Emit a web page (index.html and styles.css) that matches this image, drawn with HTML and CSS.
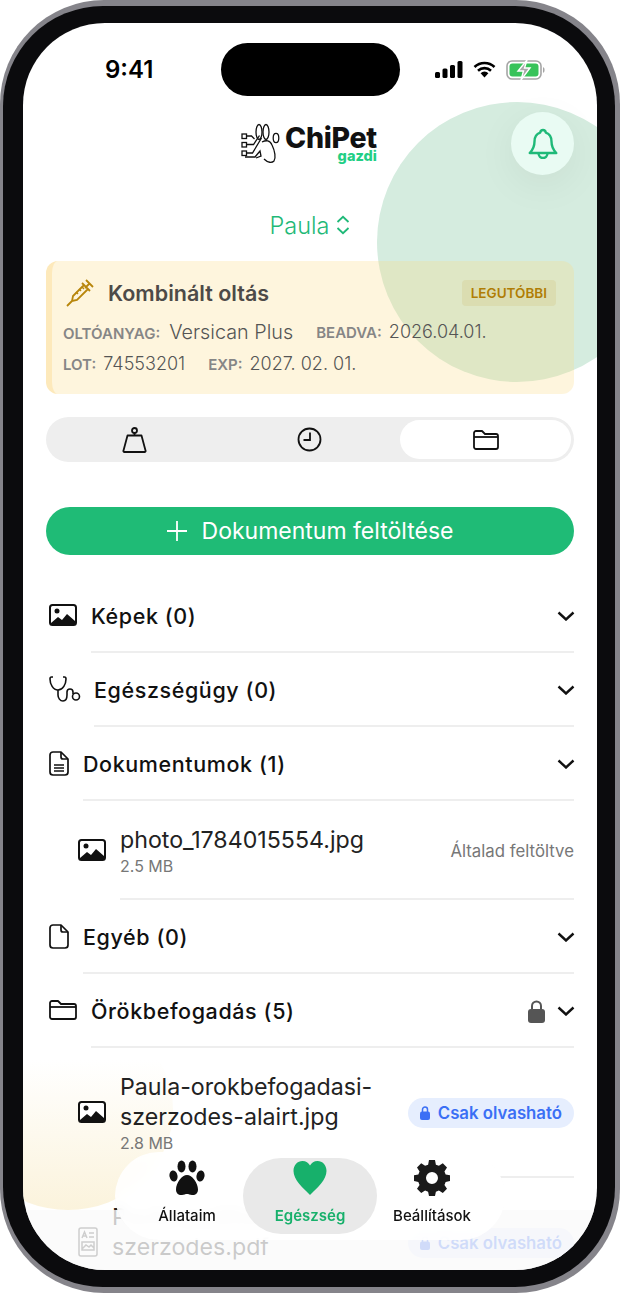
FILE: index.html
```html
<!doctype html>
<html lang="hu">
<head>
    <meta charset="utf-8">
    <meta name="viewport" content="width=device-width, initial-scale=1">
    <title>ChiPet gazdi</title>
    <link rel="stylesheet" href="styles.css">
</head>
<body>
<div class="phone">
<div class="bezel">
<div class="screen">
    <div class="blob-green"></div>
    <div class="blob-yellow"></div>

    <div class="content">
        <!-- Status bar -->
        <div class="status">
            <span class="time">9:41</span>
            <div class="island"></div>
            <div class="status-icons">
                <svg width="28" height="17" viewBox="0 0 28 17"><rect x="0" y="11" width="5" height="6" rx="1.5"/><rect x="7.5" y="7.5" width="5" height="9.5" rx="1.5"/><rect x="15" y="4" width="5" height="13" rx="1.5"/><rect x="22.5" y="0" width="5" height="17" rx="1.5"/></svg>
                <svg width="23" height="17" viewBox="0 0 23 17"><path d="M1.5 6a14.5 14.5 0 0 1 20 0M5 9.7a9.5 9.5 0 0 1 13 0" fill="none" stroke="#000" stroke-width="2.6"/><path d="M7.6 12.2a5.6 5.6 0 0 1 7.8 0L11.5 16.6z"/></svg>
                <svg width="40" height="20" viewBox="0 0 40 20"><rect x="1" y="1" width="34" height="18" rx="5" fill="#fff" stroke="#a5a5a5" stroke-width="1.6"/><rect x="3.5" y="3.5" width="29" height="13" rx="3" fill="#38c35a"/><path d="M37 7v6a3 3 0 0 0 1.6-3A3 3 0 0 0 37 7z" fill="#a5a5a5"/><path d="M21 0l-9 11h5.5L15 20l9-12h-5.5z" fill="#a9a9a9" stroke="#fff" stroke-width="1.4"/></svg>
            </div>
        </div>

        <!-- Logo and bell -->
        <div class="header">
            <div class="logo">
                <svg class="logo-mark" width="41" height="41" viewBox="0 0 41 41" fill="none" stroke="#111" stroke-width="1.3">
                    <ellipse cx="19" cy="9" rx="3" ry="7.500"/><ellipse cx="26" cy="9" rx="3" ry="7.500"/><ellipse cx="36" cy="15" rx="2.800" ry="4.600"/>
                    <rect x="2" y="11" width="4.500" height="4.500"/><rect x="2" y="19.500" width="4.500" height="4.500"/><rect x="2" y="28" width="4.500" height="4.500"/>
                    <path d="M6.500 13h5l3 3M6.500 21.500h7l6-9M6.500 30h6l9-15M5 34h10l5-6 1 5-5 2"/>
                    <path d="M22 19c4-2 8-2 10 3 3 6 4 13 2 16-2 2-6 2-10-2"/>
                </svg>
                <div class="logo-text">
                    <span class="logo-name">ChiPet</span>
                    <span class="logo-sub">gazdi</span>
                </div>
            </div>
            <div class="bell">
                <svg width="30" height="31" viewBox="0 0 30 31" fill="none" stroke="#1fb978" stroke-width="2.4" stroke-linejoin="round"><path d="M15 2c-1.600 0-2.600 1-2.800 2.600C8 6 6.500 9.500 6.500 13.500c0 4.500-1.800 8.500-4.800 11.500h26.600c-3-3-4.800-7-4.800-11.500 0-4-1.500-7.500-5.700-8.900C17.600 3 16.600 2 15 2z"/><path d="M10.500 25c0 3 2 5 4.500 5s4.500-2 4.500-5"/></svg>
            </div>
        </div>

        <div class="pet-name">
            <span>Paula</span>
            <svg width="14" height="20" viewBox="0 0 14 20" fill="none" stroke="#1fb978" stroke-width="1.800"><path d="M1.500 7L7 1.800 12.500 7M1.500 13L7 18.200 12.500 13"/></svg>
        </div>

        <!-- Last vaccination -->
        <div class="vaccine">
            <div class="vaccine-top">
                <svg width="28" height="28" viewBox="0 0 28 28" fill="none" stroke="#b8860b" stroke-width="1.800"><path d="M20 1l7 7M23.500 4.500L19 9M16 4l8 8M18 6L7 17l-1 5 5-1L22 10M6 22l-5 5"/><path d="M10 13l2 2M13 10l2 2M16 8l2 2" stroke-width="1.500"/></svg>
                <span class="vaccine-title">Kombinált oltás</span>
                <span class="vaccine-badge">LEGUTÓBBI</span>
            </div>
            <div class="vaccine-row">
                <span class="field"><b>OLTÓANYAG:</b> <span class="value-wide">Versican Plus</span></span>
                <span class="field"><b>BEADVA:</b> 2026.04.01.</span>
            </div>
            <div class="vaccine-row">
                <span class="field"><b>LOT:</b> 74553201</span>
                <span class="field"><b>EXP:</b> 2027. 02. 01.</span>
            </div>
        </div>

        <!-- Tabs -->
        <div class="tabs">
            <div class="tab tab-weight">
                <svg width="25" height="26" viewBox="0 0 25 26" fill="none" stroke="#111" stroke-width="1.800" stroke-linejoin="round"><circle cx="12.500" cy="3.500" r="2.500"/><path d="M12.500 6v2.500M5.500 8.500h14L23.500 23.500a1 1 0 0 1-1 1.500h-20a1 1 0 0 1-1-1.500z"/></svg>
            </div>
            <div class="tab tab-history">
                <svg width="25" height="25" viewBox="0 0 25 25" fill="none" stroke="#111" stroke-width="1.800"><circle cx="12.500" cy="12.500" r="11"/><path d="M13 5.500v7.500H6.500"/></svg>
            </div>
            <div class="tab tab-docs">
                <svg width="26" height="20" viewBox="0 0 26 20" fill="none" stroke="#111" stroke-width="1.800" stroke-linejoin="round"><path d="M1 3a2 2 0 0 1 2-2h6l3 3h11a2 2 0 0 1 2 2v11a2 2 0 0 1-2 2H3a2 2 0 0 1-2-2z"/><path d="M1 7h24"/></svg>
            </div>
        </div>

        <div class="upload">
            <svg width="20" height="20" viewBox="0 0 20 20" stroke="#fff" stroke-width="1.800"><path d="M10 0v20M0 10h20"/></svg>
            <span>Dokumentum feltöltése</span>
        </div>

        <!-- Document groups -->
        <div class="list">
            <div class="row">
                <svg class="icon" width="28" height="22" viewBox="0 0 28 22"><rect x="1" y="1" width="26" height="20" rx="2.500" fill="#fff" stroke="#111" stroke-width="2"/><circle cx="8" cy="7" r="2.500" fill="#111"/><path d="M2 19l7-6 4 3 5-6 8 7v3H2z" fill="#111"/></svg>
                <div class="row-body">
                    <span class="row-title">Képek (0)</span>
                    <svg class="chevron" width="18" height="10" viewBox="0 0 18 10"><path d="M1.500 1.500L9 8.500l7.500-7"/></svg>
                </div>
            </div>
            <div class="row">
                <svg class="icon icon-steth" width="32" height="28" viewBox="0 0 32 28" fill="none" stroke="#111" stroke-width="1.600"><path d="M4 2H2.500C1.500 2 1 3 1 4c0 5 3 11 8 11s8-6 8-11c0-1-.5-2-1.500-2H14"/><path d="M9 15v5c0 3 2 6 5 6s4-3 4-6v-3c0-2 1-3 3-3s3 1 3 3v2"/><circle cx="27" cy="21.500" r="3.500"/></svg>
                <div class="row-body">
                    <span class="row-title">Egészségügy (0)</span>
                    <svg class="chevron" width="18" height="10" viewBox="0 0 18 10"><path d="M1.500 1.500L9 8.500l7.500-7"/></svg>
                </div>
            </div>
            <div class="row">
                <svg class="icon" width="20" height="25" viewBox="0 0 20 25" fill="none" stroke="#111" stroke-width="1.700" stroke-linejoin="round"><path d="M12 1H4a3 3 0 0 0-3 3v17a3 3 0 0 0 3 3h12a3 3 0 0 0 3-3V8z"/><path d="M12 1v5a2 2 0 0 0 2 2h5M5 14h10M5 17h10M5 20h10"/></svg>
                <div class="row-body">
                    <span class="row-title">Dokumentumok (1)</span>
                    <svg class="chevron" width="18" height="10" viewBox="0 0 18 10"><path d="M1.500 1.500L9 8.500l7.500-7"/></svg>
                </div>
            </div>
            <div class="row row-file">
                <svg class="icon" width="28" height="22" viewBox="0 0 28 22"><rect x="1" y="1" width="26" height="20" rx="2.500" fill="#fff" stroke="#111" stroke-width="2"/><circle cx="8" cy="7" r="2.500" fill="#111"/><path d="M2 19l7-6 4 3 5-6 8 7v3H2z" fill="#111"/></svg>
                <div class="row-body file-short">
                    <div class="file-text">
                        <div class="file-name">photo_1784015554.jpg</div>
                        <div class="file-size">2.5 MB</div>
                    </div>
                    <span class="file-owner">Általad feltöltve</span>
                </div>
            </div>
            <div class="row">
                <svg class="icon" width="20" height="25" viewBox="0 0 20 25" fill="none" stroke="#111" stroke-width="1.700" stroke-linejoin="round"><path d="M12 1H4a3 3 0 0 0-3 3v17a3 3 0 0 0 3 3h12a3 3 0 0 0 3-3V8z"/><path d="M12 1v5a2 2 0 0 0 2 2h5"/></svg>
                <div class="row-body">
                    <span class="row-title">Egyéb (0)</span>
                    <svg class="chevron" width="18" height="10" viewBox="0 0 18 10"><path d="M1.500 1.500L9 8.500l7.500-7"/></svg>
                </div>
            </div>
            <div class="row">
                <svg class="icon" width="28" height="20" viewBox="0 0 28 20" fill="none" stroke="#111" stroke-width="1.800" stroke-linejoin="round"><path d="M1 3a2 2 0 0 1 2-2h6l3 3h13a2 2 0 0 1 2 2v11a2 2 0 0 1-2 2H3a2 2 0 0 1-2-2z"/><path d="M1 7h26"/></svg>
                <div class="row-body">
                    <span class="row-title">Örökbefogadás (5)</span>
                    <svg class="lock-gray" width="17" height="23" viewBox="0 0 17 23"><path d="M4 10V6a4.500 4.500 0 0 1 9 0v4" fill="none" stroke="#555" stroke-width="2"/><rect y="9" width="17" height="14" rx="3" fill="#555"/></svg>
                    <svg class="chevron chevron-near" width="18" height="10" viewBox="0 0 18 10"><path d="M1.500 1.500L9 8.500l7.500-7"/></svg>
                </div>
            </div>
            <div class="row row-file">
                <svg class="icon" width="28" height="22" viewBox="0 0 28 22"><rect x="1" y="1" width="26" height="20" rx="2.500" fill="#fff" stroke="#111" stroke-width="2"/><circle cx="8" cy="7" r="2.500" fill="#111"/><path d="M2 19l7-6 4 3 5-6 8 7v3H2z" fill="#111"/></svg>
                <div class="row-body file-tall">
                    <div class="file-text">
                        <div class="file-name">Paula-orokbefogadasi-szerzodes-alairt.jpg</div>
                        <div class="file-size">2.8 MB</div>
                    </div>
                    <span class="readonly">
                        <svg width="10" height="14" viewBox="0 0 10 14"><path d="M2.500 6V3.500a2.500 2.500 0 0 1 5 0V6" fill="none" stroke="#3b6ff5" stroke-width="1.500"/><rect y="5.500" width="10" height="8.500" rx="2" fill="#3b6ff5"/></svg>
                        Csak olvasható
                    </span>
                </div>
            </div>
            <div class="row row-file">
                <svg class="icon icon-pdf" width="20" height="30" viewBox="0 0 20 30" fill="none" stroke="#333" stroke-width="1.500"><rect x="1" y="1" width="18" height="28" rx="2"/><path d="M4 11l2.500-6L9 11M5 9h3M11 6h5M11 10h5M4 15h12v8H4zM4 22l4-4 3 2 2-2 3 3"/></svg>
                <div class="row-body file-tall">
                    <div class="file-text file-text-cut">
                        <div class="file-name">Paula-orokbefogadasi-szerzodes.pdf</div>
                    </div>
                    <span class="readonly">
                        <svg width="10" height="14" viewBox="0 0 10 14"><path d="M2.500 6V3.500a2.500 2.500 0 0 1 5 0V6" fill="none" stroke="#3b6ff5" stroke-width="1.500"/><rect y="5.500" width="10" height="8.500" rx="2" fill="#3b6ff5"/></svg>
                        Csak olvasható
                    </span>
                </div>
            </div>
        </div>
    </div>

    <div class="fade"></div>

    <!-- Bottom navigation -->
    <div class="nav">
        <div class="nav-item nav-pets">
            <svg width="36" height="36" viewBox="0 0 36 36" fill="#111"><ellipse cx="4.500" cy="16" rx="4" ry="5.500" transform="rotate(-12 4.500 16)"/><ellipse cx="12.500" cy="6.500" rx="4" ry="6"/><ellipse cx="23.500" cy="6.500" rx="4" ry="6"/><ellipse cx="31.500" cy="16" rx="4" ry="5.500" transform="rotate(12 31.500 16)"/><path d="M18 15c5 0 11 8 11 14.500 0 4-3 6-6 5.500-2-.3-3.500-1-5-1s-3 .7-5 1c-3 .5-6-1.500-6-5.500C7 23 13 15 18 15z"/></svg>
            <span>Állataim</span>
        </div>
        <div class="nav-item nav-active">
            <svg width="34" height="36" viewBox="0 0 34 36" fill="#17b06b"><path d="M17 35C10 28 .500 20 .500 11 .500 5 4.500 1 9.500 1c3.500 0 6 1.800 7.500 4.500C18.500 2.800 21 1 24.500 1c5 0 9 4 9 10 0 9-9.500 17-16.500 24z"/></svg>
            <span>Egészség</span>
        </div>
        <div class="nav-item nav-settings">
            <svg width="36" height="36" viewBox="0 0 24 24" fill="#1a1a1a"><path fill-rule="evenodd" d="M10 0h4l.6 3.100 2 .8L19.200 2.200 22 5l-1.700 2.600.8 2L24 10.200v3.800l-2.900.6-.8 2L22 19.200 19.200 22l-2.600-1.700-2 .8L14 24h-4l-.6-2.900-2-.8L4.800 22 2 19.200l1.700-2.600-.8-2L0 14v-3.800l2.900-.6.8-2L2 5l2.800-2.800 2.600 1.700 2-.8zM12 8a4 4 0 1 0 0 8 4 4 0 0 0 0-8z"/></svg>
            <span>Beállítások</span>
        </div>
    </div>
</div>
</div>
</div>
</body>
</html>
```

FILE: styles.css
```css
html, body {
    margin: 0;
    padding: 0;
    background: #fff;
}

body {
    font-family: Inter, "Liberation Sans", sans-serif;
    color: #111;
}

.phone {
    width: 620px;
    height: 1293px;
    box-sizing: border-box;
    padding: 6px 5px 6px 3px;
    background: #85848a;
    border-radius: 104px;
}

.bezel {
    height: 100%;
    box-sizing: border-box;
    padding: 17px 18px 17px 20px;
    background: #0b0b0d;
    border-radius: 100px;
}

.screen {
    position: relative;
    height: 100%;
    overflow: hidden;
    background: #fff;
    border-radius: 82px;
}

/* Background shapes */
.blob-green {
    position: absolute;
    left: 354px;
    top: 79px;
    width: 280px;
    height: 280px;
    border-radius: 50%;
    background: #d5ecdf;
}

.blob-yellow {
    position: absolute;
    left: -60px;
    top: 987px;
    width: 210px;
    height: 200px;
    border-radius: 50%;
    background: linear-gradient(to bottom, rgba(250, 236, 200, 0) 25%, #fbf3dc 100%);
}

.content {
    position: relative;
    padding: 0 23px;
}

/* Status bar */
.status {
    display: flex;
    align-items: center;
    height: 53px;
    padding: 20px 50px 0 82px;
    margin: 0 -23px;
}

.time {
    width: 116px;
    font-size: 24px;
    font-weight: 600;
    color: #000;
}

.island {
    width: 179px;
    height: 53px;
    border-radius: 27px;
    background: #000;
}

.status-icons {
    display: flex;
    align-items: center;
    gap: 10px;
    margin-left: 35px;
}

/* Header */
.header {
    display: flex;
    align-items: center;
    justify-content: space-between;
    height: 63px;
    margin-top: 16px;
    padding-left: 194px;
}

.logo {
    display: flex;
    align-items: center;
    gap: 4px;
}

.logo-text {
    display: flex;
    flex-direction: column;
    align-items: flex-end;
}

.logo-name {
    font-size: 28.5px;
    font-weight: 800;
    line-height: 24px;
    letter-spacing: -0.3px;
}

.logo-sub {
    font-size: 14.5px;
    font-weight: 800;
    line-height: 12px;
    color: #22cf85;
}

.bell {
    display: flex;
    align-items: center;
    justify-content: center;
    width: 63px;
    height: 63px;
    border-radius: 50%;
    background: #e9fbf3;
    box-shadow: 0 10px 40px rgba(0, 0, 0, 0.06);
}

.pet-name {
    display: flex;
    align-items: center;
    justify-content: center;
    gap: 7px;
    height: 36px;
    margin-top: 32px;
    font-size: 23.5px;
    font-weight: 300;
    color: #1fb978;
}

/* Vaccination card */
.vaccine {
    box-sizing: border-box;
    height: 133px;
    margin-top: 18px;
    padding: 19px 18px 0 11px;
    border-left: 6px solid #fde9bb;
    border-radius: 12px;
    background: rgba(250, 217, 128, 0.27);
    color: #555;
}

.vaccine-top {
    display: flex;
    align-items: center;
    height: 26px;
    padding-left: 3px;
    margin-bottom: 10px;
}

.vaccine-title {
    flex: 1;
    margin-left: 14px;
    font-size: 21.5px;
    font-weight: 600;
    color: #4d4a48;
}

.vaccine-badge {
    padding: 0 9px;
    line-height: 26px;
    border-radius: 4px;
    background: rgba(184, 134, 11, 0.1);
    font-size: 13.5px;
    font-weight: 600;
    color: #b07d05;
}

.vaccine-row {
    display: flex;
    gap: 23px;
    height: 32px;
    line-height: 32px;
    font-size: 18px;
    font-weight: 300;
}

.field b {
    margin-right: 2px;
    font-size: 15px;
    font-weight: 600;
    color: #868686;
}

.value-wide {
    margin-left: 2px;
    font-size: 19.8px;
}

/* Tabs */
.tabs {
    display: flex;
    box-sizing: border-box;
    height: 45px;
    margin-top: 23px;
    padding: 3px;
    border-radius: 23px;
    background: #eee;
}

.tab {
    display: flex;
    align-items: center;
    justify-content: center;
}

.tab-weight {
    width: 170px;
}

.tab-history {
    width: 181px;
}

.tab-docs {
    width: 171px;
    background: #fff;
    border-radius: 20px;
}

.upload {
    display: flex;
    align-items: center;
    justify-content: center;
    gap: 15px;
    height: 48px;
    margin-top: 45px;
    border-radius: 24px;
    background: #1fbb76;
    color: #fff;
    font-size: 23px;
}

/* List */
.list {
    margin-top: 24px;
}

.row {
    display: flex;
    align-items: center;
    padding-left: 3px;
}

.row-file {
    padding-left: 32px;
}

.icon {
    flex: none;
    margin-right: 14px;
    margin-top: -2px;
}

.icon-steth {
    margin-right: 13px;
}

.row-body {
    display: flex;
    flex: 1;
    align-items: center;
    box-sizing: border-box;
    height: 74px;
    padding-top: 2px;
    border-bottom: 2px solid #eee;
}

.row-title {
    flex: 1;
    font-size: 21.5px;
    font-weight: 500;
    letter-spacing: 0.6px;
}

.chevron {
    fill: none;
    stroke: #111;
    stroke-width: 2.4;
    margin-right: -1px;
}

.chevron-near {
    margin-left: 12px;
}

.file-short {
    height: 99px;
}

.file-tall {
    height: 130px;
}

.file-text {
    flex: 1;
}

.file-text-cut {
    padding-bottom: 22px;
}

.file-name {
    font-size: 23.2px;
    line-height: 30px;
    color: #222;
}

.file-size {
    font-size: 16px;
    line-height: 22px;
    color: #777;
}

.file-owner {
    font-size: 16.8px;
    color: #777;
}

.readonly {
    display: flex;
    flex: none;
    align-items: center;
    gap: 8px;
    height: 30px;
    padding: 0 12px;
    border-radius: 15px;
    background: #e6eefe;
    font-size: 16.8px;
    font-weight: 600;
    color: #3b6ff5;
}

/* Bottom fade and nav */
.fade {
    position: absolute;
    left: 0;
    right: 0;
    bottom: 0;
    height: 60px;
    background: rgba(250, 250, 250, 0.78);
}

.nav {
    position: absolute;
    left: 92px;
    top: 1129px;
    display: flex;
    box-sizing: border-box;
    width: 390px;
    height: 88px;
    padding: 6px 18px 6px 16px;
    border-radius: 44px;
    background: rgba(255, 255, 255, 0.88);
    backdrop-filter: blur(6px);
}

.nav-item {
    display: flex;
    flex-direction: column;
    align-items: center;
    box-sizing: border-box;
    padding-top: 2px;
    font-size: 15px;
    font-weight: 500;
}

.nav-item span {
    margin-top: 10px;
}

.nav-pets {
    width: 112px;
}

.nav-active {
    width: 134px;
    border-radius: 38px;
    background: #e9e9e9;
    color: #17b06b;
    font-weight: 600;
}

.nav-settings {
    width: 110px;
}
```
